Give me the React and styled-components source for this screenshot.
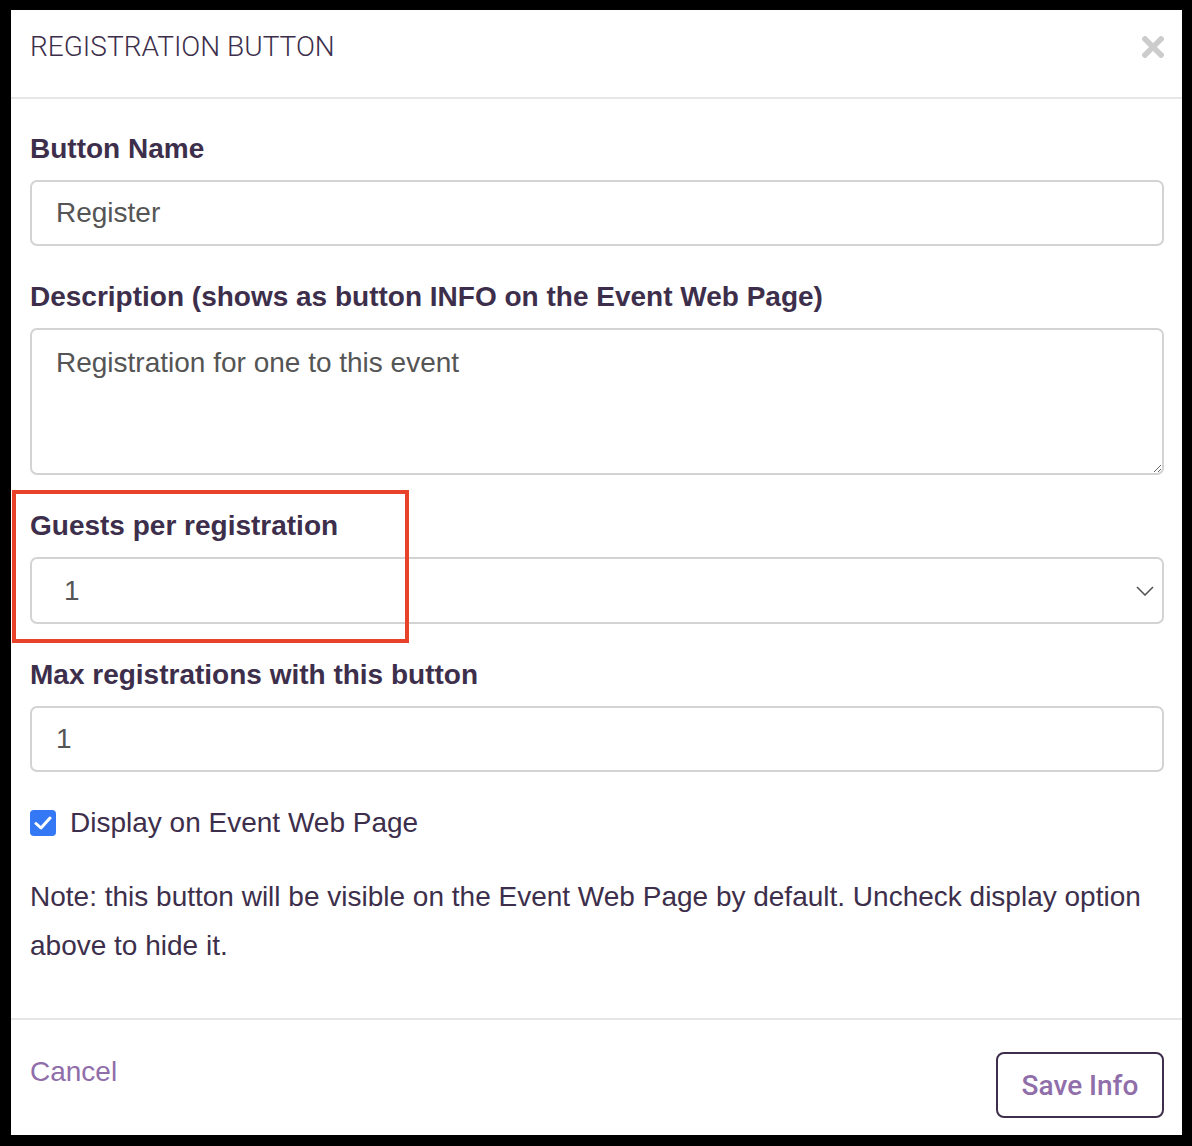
import styled, { createGlobalStyle } from "styled-components";

const GlobalStyle = createGlobalStyle`
  html, body {
    margin: 0;
    padding: 0;
    background: #000;
  }
  * {
    box-sizing: border-box;
  }
`;

const Frame = styled.div`
  width: 1192px;
  height: 1146px;
  padding: 10px 10px 11px 11px;
  background: #000;
  position: relative;
`;

const Modal = styled.div`
  height: 100%;
  background: #fff;
  display: flex;
  flex-direction: column;
  font-family: "Liberation Sans", Arial, sans-serif;
  color: #3d2f4b;
`;

const Header = styled.div`
  height: 89px;
  display: flex;
  align-items: center;
  justify-content: space-between;
  padding: 0 18px 0 19px;
  border-bottom: 2px solid #e6e6e6;
`;

const Title = styled.h4`
  margin: 0 0 14px;
  font-family: Roboto, "Liberation Sans", sans-serif;
  font-weight: 300;
  font-size: 28px;
  color: #3d2f4b;
`;

const CloseButton = styled.button`
  border: none;
  background: none;
  padding: 0;
  margin-bottom: 14px;
  display: flex;
  cursor: pointer;
`;

const Body = styled.div`
  flex: 1;
  padding: 32px 18px 0 19px;
`;

const Field = styled.div`
  margin-bottom: 33px;
`;

const Label = styled.label`
  display: block;
  font-weight: 700;
  font-size: 28px;
  line-height: 36px;
  margin-bottom: 13px;
  color: #3d2f4b;
`;

const inputBase = `
  display: block;
  width: 100%;
  border: 2px solid #d3d3d3;
  border-radius: 7px;
  font-family: "Liberation Sans", Arial, sans-serif;
  font-size: 28px;
  color: #555;
  background: #fff;
  outline: none;
`;

const TextInput = styled.input`
  ${inputBase}
  height: 66px;
  padding: 0 24px;
`;

const TextArea = styled.textarea`
  ${inputBase}
  height: 147px;
  padding: 16px 24px;
  line-height: 34px;
  resize: vertical;
`;

const SelectWrap = styled.div`
  position: relative;
`;

const Select = styled.select`
  ${inputBase}
  height: 67px;
  padding: 0 32px;
  appearance: none;
  -webkit-appearance: none;
`;

const Chevron = styled.svg`
  position: absolute;
  right: 10px;
  top: 50%;
  transform: translateY(-50%);
  pointer-events: none;
`;

const CheckRow = styled.label`
  display: flex;
  align-items: center;
  gap: 14px;
  font-size: 28px;
  line-height: 36px;
  color: #3d2f4b;
`;

const CheckBox = styled.span`
  width: 26px;
  height: 26px;
  border-radius: 4px;
  background: #3478f6;
  display: flex;
  align-items: center;
  justify-content: center;
`;

const Note = styled.p`
  margin: 31px 0 0;
  font-size: 28px;
  line-height: 49px;
  color: #3d2f4b;
`;

const Footer = styled.div`
  display: flex;
  justify-content: space-between;
  align-items: flex-start;
  padding: 32px 18px 17px 19px;
  border-top: 2px solid #e6e6e6;
`;

const CancelLink = styled.a`
  margin-top: 2px;
  font-size: 28px;
  line-height: 36px;
  color: #8f6eaa;
  text-decoration: none;
  cursor: pointer;
`;

const SaveButton = styled.button`
  width: 168px;
  height: 66px;
  border: 2px solid #3d2f4b;
  border-radius: 8px;
  background: #fff;
  font-family: Roboto, "Liberation Sans", sans-serif;
  font-weight: 500;
  font-size: 28px;
  color: #8f6eaa;
  cursor: pointer;
`;

const Highlight = styled.div`
  position: absolute;
  left: 12px;
  top: 490px;
  width: 397px;
  height: 153px;
  border: 4px solid #e8432a;
  pointer-events: none;
`;

function App() {
  return (
    <Frame>
      <GlobalStyle />
      <Modal>
        <Header>
          <Title>REGISTRATION BUTTON</Title>
          <CloseButton aria-label="Close">
            <svg width="22" height="22" viewBox="0 0 22 22">
              <path
                d="M3 3 L19 19 M19 3 L3 19"
                stroke="#cccccc"
                strokeWidth="5.5"
                strokeLinecap="square"
              />
            </svg>
          </CloseButton>
        </Header>
        <Body>
          <Field>
            <Label>Button Name</Label>
            <TextInput defaultValue="Register" />
          </Field>
          <Field>
            <Label>Description (shows as button INFO on the Event Web Page)</Label>
            <TextArea defaultValue="Registration for one to this event" />
          </Field>
          <Field>
            <Label>Guests per registration</Label>
            <SelectWrap>
              <Select defaultValue="1">
                <option value="1">1</option>
                <option value="2">2</option>
                <option value="3">3</option>
              </Select>
              <Chevron width="18" height="10" viewBox="0 0 18 10">
                <path d="M1 1 L9 9 L17 1" fill="none" stroke="#555" strokeWidth="1.6" />
              </Chevron>
            </SelectWrap>
          </Field>
          <Field>
            <Label>Max registrations with this button</Label>
            <TextInput defaultValue="1" />
          </Field>
          <CheckRow>
            <CheckBox>
              <svg width="18" height="14" viewBox="0 0 18 14">
                <path
                  d="M2 7.5 L7 12 L16 2"
                  fill="none"
                  stroke="#fff"
                  strokeWidth="3"
                  strokeLinecap="round"
                  strokeLinejoin="round"
                />
              </svg>
            </CheckBox>
            Display on Event Web Page
          </CheckRow>
          <Note>
            Note: this button will be visible on the Event Web Page by default.
            Uncheck display option above to hide it.
          </Note>
        </Body>
        <Footer>
          <CancelLink>Cancel</CancelLink>
          <SaveButton>Save Info</SaveButton>
        </Footer>
      </Modal>
      <Highlight />
    </Frame>
  );
}

export default App;
